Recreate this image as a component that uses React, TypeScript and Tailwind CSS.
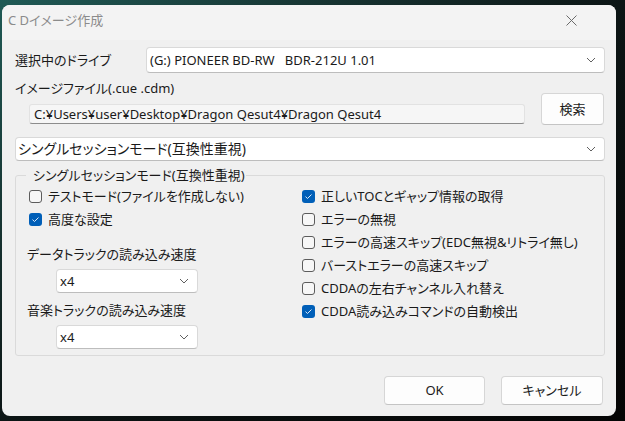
import React from 'react';

const Chevron = () => (
  <svg width="10" height="6" viewBox="0 0 10 6" className="shrink-0">
    <path d="M1 1 L5 5 L9 1" fill="none" stroke="#606060" strokeWidth="1" />
  </svg>
);

const Select = ({ text, className }: { text: string; className: string }) => (
  <div className={`flex items-center justify-between bg-white border border-[#d9d9d9] border-b-[#bdbdbd] rounded-[4px] pr-[8px] ${className}`}>
    <span className="whitespace-pre">{text}</span>
    <Chevron />
  </div>
);

const Check = ({ checked, label }: { checked?: boolean; label: string }) => (
  <div className="flex items-center h-[23px] gap-[6px]">
    {checked ? (
      <span className="w-[13px] h-[13px] rounded-[3px] bg-[#005fb8] flex items-center justify-center">
        <svg width="9" height="7" viewBox="0 0 9 7">
          <path d="M1.5 3.6 L3.5 5.5 L7.5 1.5" fill="none" stroke="#dce9f7" strokeWidth="1" />
        </svg>
      </span>
    ) : (
      <span className="w-[13px] h-[13px] rounded-[3px] border border-[#5c5c5c] bg-[#f7f7f7]" />
    )}
    <span>{label}</span>
  </div>
);

const Button = ({ children, className }: { children: React.ReactNode; className: string }) => (
  <div className={`flex items-center justify-center bg-[#fdfdfd] border border-[#d6d6d6] border-b-[#c4c4c4] rounded-[4px] ${className}`}>
    {children}
  </div>
);

export default function App() {
  return (
    <div className="w-[625px] h-[421px] bg-gradient-to-br from-[#1f5a55] via-[#0c1515] to-[#050505] pt-[5px] pl-[2px] text-[13px] text-[#1a1a1a] [font-family:'Noto_Sans','Noto_Sans_CJK_JP',sans-serif] [font-feature-settings:'palt'] leading-none">
      <div className="w-[614px] h-[411px] rounded-[8px] bg-[#f0f0f0] flex flex-col overflow-hidden">
        <div className="h-[35px] bg-[#f3f3f3] flex items-center justify-between pl-[6px] pr-[39px] pb-[4px]">
          <span className="text-[#8b8b8b] text-[13px]">C Dイメージ作成</span>
          <svg width="11" height="11" viewBox="0 0 11 11">
            <path d="M0.5 0.5 L10.5 10.5 M10.5 0.5 L0.5 10.5" stroke="#6a6a6a" strokeWidth="1" />
          </svg>
        </div>

        <div className="flex flex-col pl-[13px] pr-[11px]">
          <div className="flex items-center mt-[7px]">
            <span className="w-[131px]">選択中のドライブ</span>
            <Select text="(G:) PIONEER BD-RW   BDR-212U 1.01" className="flex-1 h-[26px] pl-[3px]" />
          </div>

          <div className="flex items-end">
            <div className="flex flex-col flex-1">
              <span className="h-[20px] mt-[5px] flex items-center">イメージファイル(.cue .cdm)</span>
              <div className="mt-[6px] ml-[14px] w-[496px] h-[20px] flex items-center bg-[#f6f6f6] border border-[#e2e2e2] border-b-[#8c8c8c] rounded-[3px] px-[4px]">
                C:¥Users¥user¥Desktop¥Dragon Qesut4¥Dragon Qesut4
              </div>
            </div>
            <Button className="w-[63px] h-[32px] mr-[1px] mb-[-1px]">検索</Button>
          </div>

          <Select text="シングルセッションモード(互換性重視)" className="mt-[13px] h-[24px] pl-[2px] text-[14px]" />

          <fieldset className="mt-[4px] border border-[#dadada] rounded-[3px] pb-[6px] pl-[10px] flex">
            <legend className="h-[20px] leading-[20px]">
              <span className="ml-[6px] px-[1px]">シングルセッションモード(互換性重視)</span>
            </legend>
            <div className="flex w-full">
              <div className="flex flex-col pl-[1px] w-[276px]">
                <div className="ml-[2px]">
                  <Check label="テストモード(ファイルを作成しない)" />
                  <Check checked label="高度な設定" />
                </div>
                <span className="mt-[13px] h-[20px] flex items-center">データトラックの読み込み速度</span>
                <Select text="x4" className="mt-[5px] ml-[29px] w-[142px] h-[24px] pl-[3px]" />
                <span className="mt-[7px] h-[20px] flex items-center">音楽トラックの読み込み速度</span>
                <Select text="x4" className="mt-[5px] ml-[29px] w-[142px] h-[24px] pl-[3px]" />
              </div>
              <div className="flex flex-col">
                <Check checked label="正しいTOCとギャップ情報の取得" />
                <Check label="エラーの無視" />
                <Check label="エラーの高速スキップ(EDC無視&リトライ無し)" />
                <Check label="バーストエラーの高速スキップ" />
                <Check label="CDDAの左右チャンネル入れ替え" />
                <Check checked label="CDDA読み込みコマンドの自動検出" />
              </div>
            </div>
          </fieldset>
        </div>

        <div className="flex justify-end gap-[16px] pr-[13px] mt-[20px]">
          <Button className="w-[101px] h-[29px]">OK</Button>
          <Button className="w-[102px] h-[29px]">キャンセル</Button>
        </div>
      </div>
    </div>
  );
}
